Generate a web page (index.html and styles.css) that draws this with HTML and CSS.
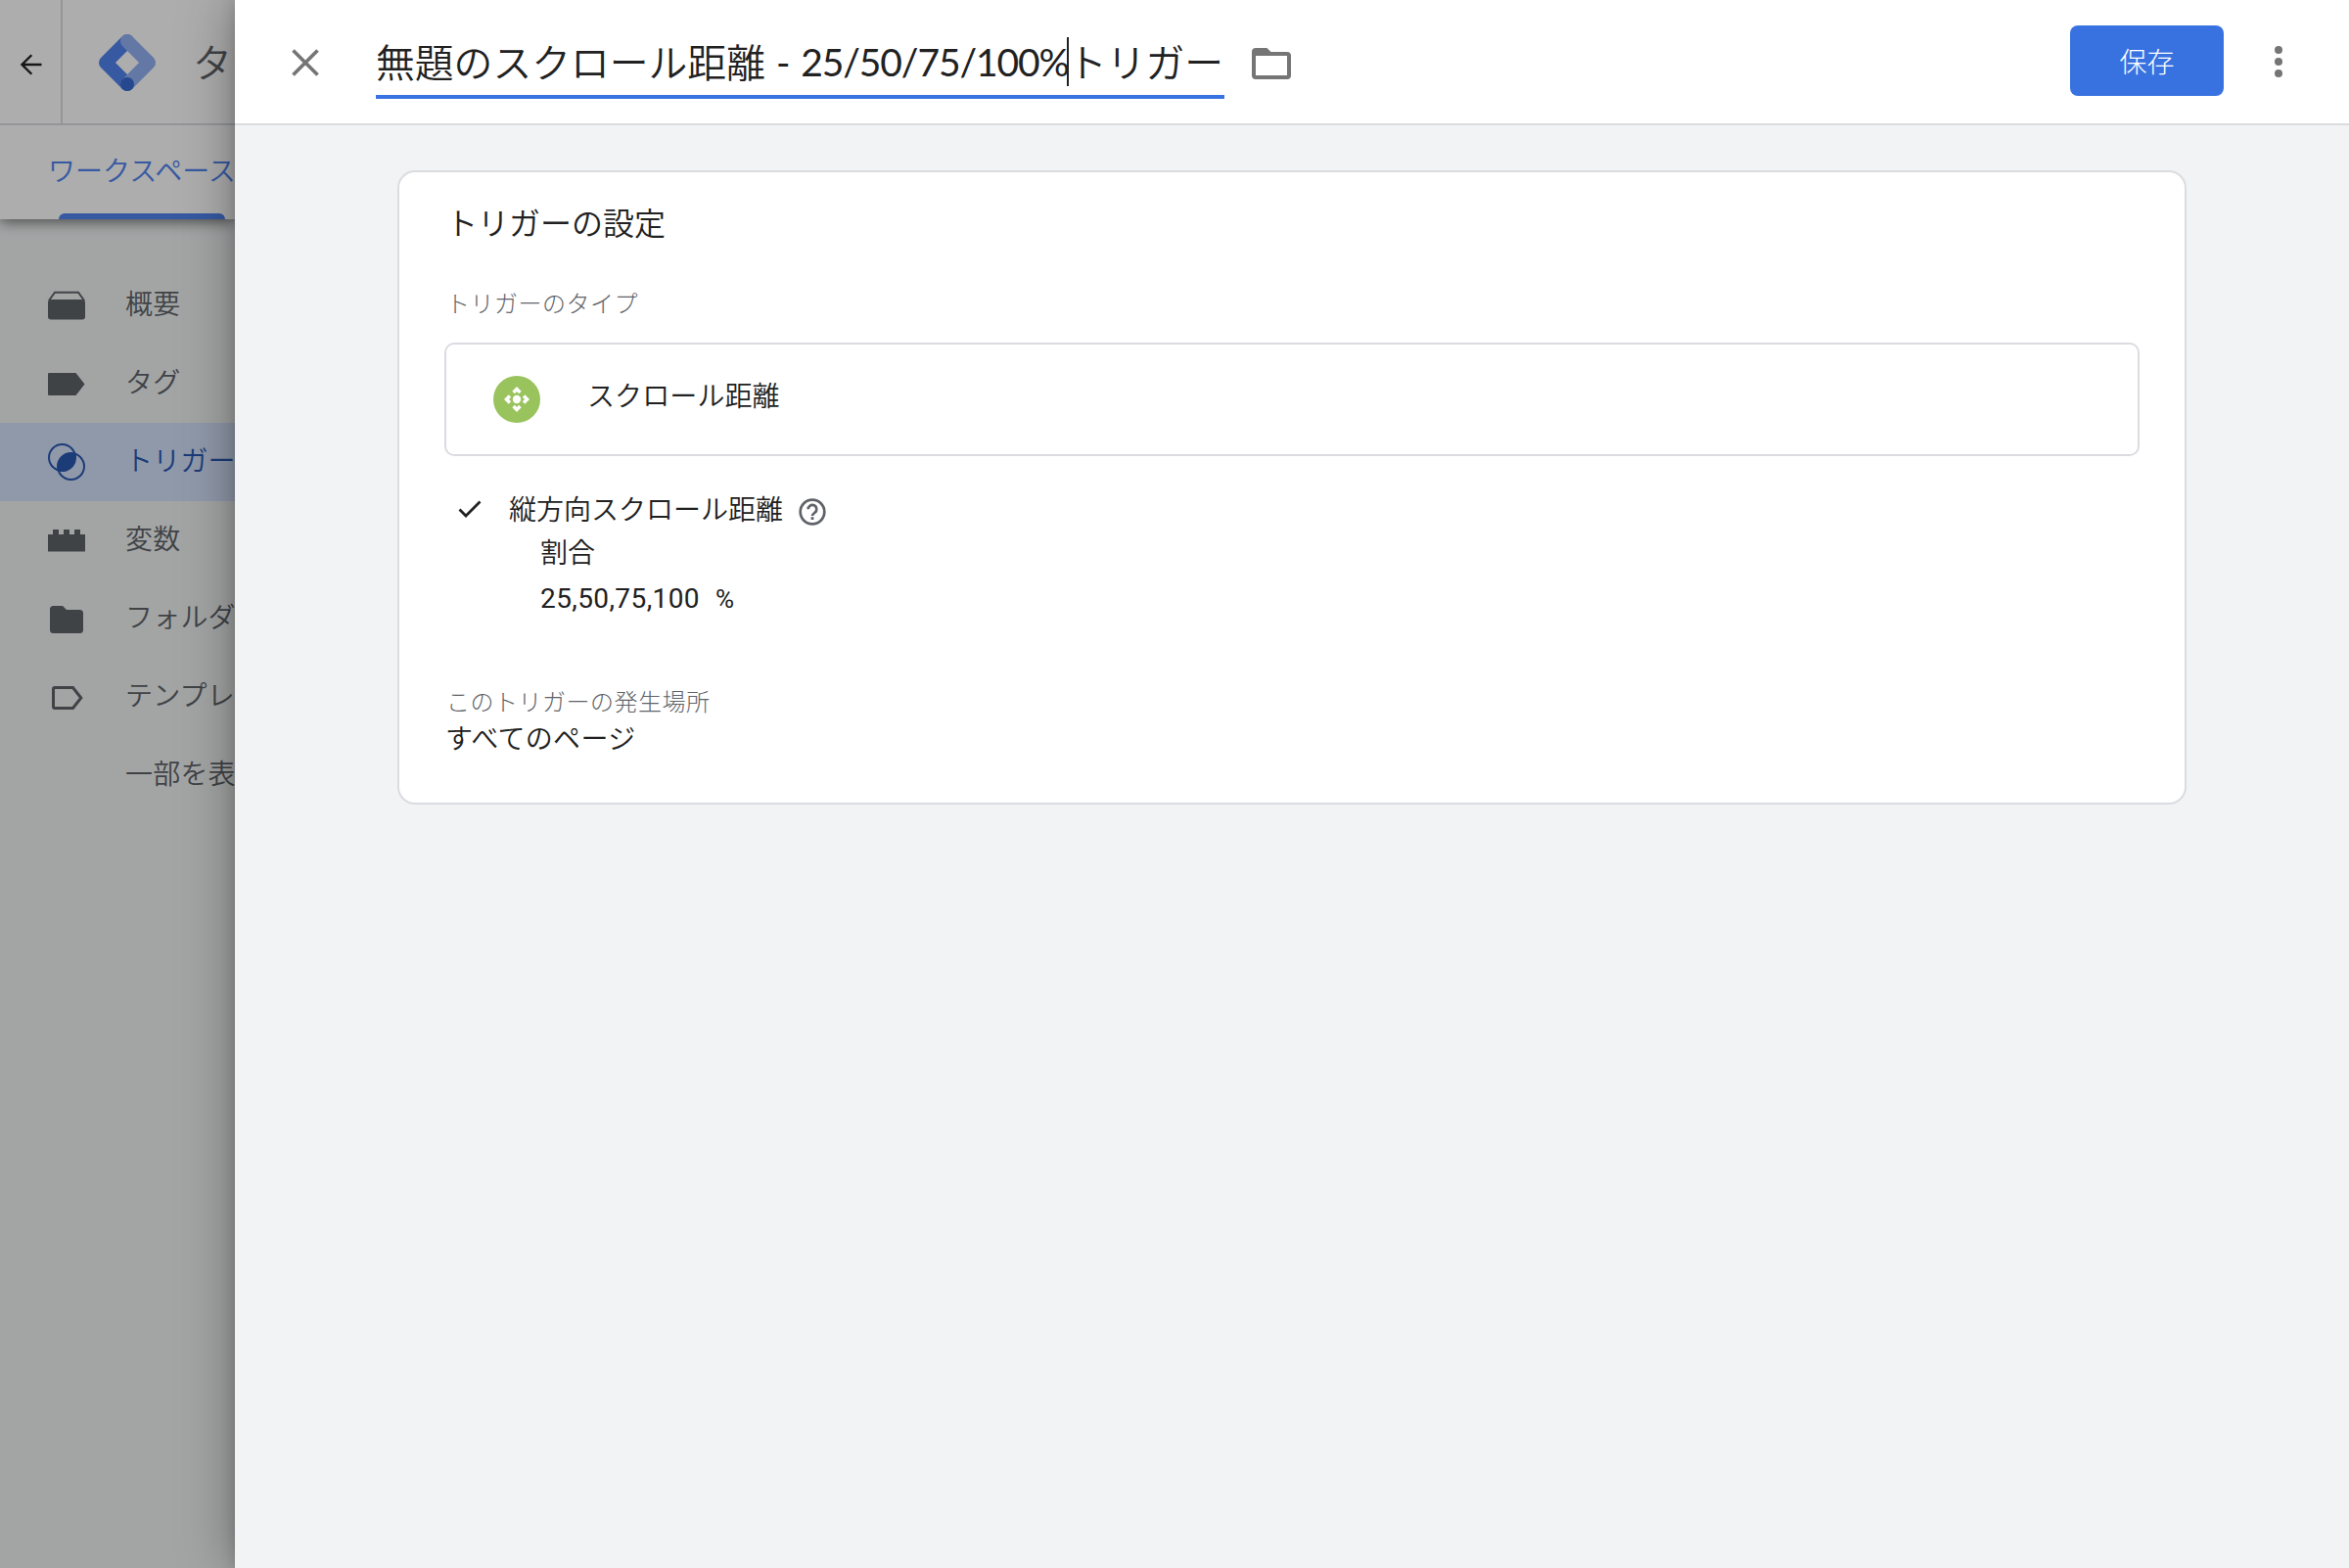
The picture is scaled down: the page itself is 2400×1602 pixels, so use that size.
FILE: index.html
```html
<!DOCTYPE html>
<html lang="ja">
<head>
	<meta charset="utf-8">
	<title>トリガーの設定</title>
	<link rel="stylesheet" href="styles.css">
</head>

<body>
	<div class="app">
		<header class="topbar">
			<div class="brand-row">
				<div class="back">
					<svg width="22" height="22" viewBox="0 0 22 22"><path d="M21.500 11H1.800M11.300 1.200L1.500 11l9.800 9.800" fill="none" stroke="#222" stroke-width="2.300"/></svg>
				</div>
				<svg class="logo" width="60" height="60" viewBox="0 0 60 60">
					<path d="M30 8L8 30l22 22" fill="none" stroke="#5083ef" stroke-width="14" stroke-linejoin="round" stroke-linecap="round"/>
					<path d="M30 8l22 22-22 22" fill="none" stroke="#93b1f3" stroke-width="14" stroke-linejoin="round" stroke-linecap="round"/>
					<circle cx="30" cy="52" r="7" fill="#376ad2"/>
				</svg>
				<span class="brand">タ</span>
			</div>
			<div class="tabs"><a class="tab">ワークスペース</a></div>
		</header>
		<nav class="menu">
			<a class="item">
				<svg width="40" height="40" viewBox="0 0 40 40"><path d="M2 15l6-8.300h24L38 15" fill="none" stroke="#5f6368" stroke-width="2"/><rect x="1" y="14" width="38" height="20.500" rx="3" fill="#5f6368"/></svg>
				<span>概要</span>
			</a>
			<a class="item">
				<svg width="40" height="40" viewBox="0 0 40 40"><path d="M2 9h27.500l9 11.500-9 11.500H2a1 1 0 0 1-1-1V10a1 1 0 0 1 1-1z" fill="#5f6368"/></svg>
				<span>タグ</span>
			</a>
			<a class="item active">
				<svg width="40" height="40" viewBox="0 0 40 40"><g fill="none" stroke="#2a59b2" stroke-width="2"><circle cx="15.500" cy="15.500" r="13.500"/><circle cx="24.500" cy="24.500" r="13.500"/></g><path d="M28.500 11.600A13.500 13.500 0 0 1 11.500 28.900 13.500 13.500 0 0 1 28.500 11.600z" fill="#2a59b2"/></svg>
				<span>トリガー</span>
			</a>
			<a class="item">
				<svg width="40" height="40" viewBox="0 0 40 40"><path d="M1 14h5V9h6v5h5V9h6v5h5V9h6v5h5v17.500H1z" fill="#5f6368"/></svg>
				<span>変数</span>
			</a>
			<a class="item">
				<svg width="40" height="40" viewBox="0 0 40 40"><path d="M6.500 7H16l4 4h13.500a3.500 3.500 0 0 1 3.500 3.500v17a3.500 3.500 0 0 1-3.500 3.500h-27A3.500 3.500 0 0 1 3 31.500v-21A3.500 3.500 0 0 1 6.500 7z" fill="#5f6368"/></svg>
				<span>フォルダ</span>
			</a>
			<a class="item">
				<svg width="40" height="40" viewBox="0 0 40 40"><path d="M8 10.500h18.500l8.300 10.500L26.500 31.500H8A1.500 1.500 0 0 1 6.500 30V12A1.500 1.500 0 0 1 8 10.500z" fill="none" stroke="#5f6368" stroke-width="3"/></svg>
				<span>テンプレ</span>
			</a>
			<a class="item more"><span>一部を表</span></a>
		</nav>
	</div>
	<div class="scrim"></div>

	<div class="sheet">
		<header class="sheet-head">
			<svg class="close" width="28" height="28" viewBox="0 0 28 28"><path d="M1.500 1.500l25 25M26.500 1.500l-25 25" stroke="#757575" stroke-width="3.700"/></svg>
			<div class="name"><span>無題のスクロール距離</span><span class="latin">- 25/50/75/100%</span><i class="caret"></i><span>トリガー</span></div>
			<svg class="folder" width="40" height="32" viewBox="0 0 40 32"><path d="M4 0h11.500l4 4H36a4 4 0 0 1 4 4v20a4 4 0 0 1-4 4H4a4 4 0 0 1-4-4V4a4 4 0 0 1 4-4zM4 8v20h32V8z" fill="#757575" fill-rule="evenodd"/></svg>
			<button class="save">保存</button>
			<svg class="dots" width="8" height="32" viewBox="0 0 8 32" fill="#757575"><circle cx="4" cy="4" r="4"/><circle cx="4" cy="16" r="4"/><circle cx="4" cy="28" r="4"/></svg>
		</header>

		<main class="card">
			<h2>トリガーの設定</h2>
			<div class="label">トリガーのタイプ</div>
			<div class="type">
				<svg width="48" height="48" viewBox="0 0 48 48">
					<circle cx="24" cy="24" r="24" fill="#99c35c"/>
					<circle cx="24" cy="24" r="4.200" fill="#fff"/>
					<g fill="#fff">
						<path d="M24 11l4.700 4.700-2.500 2.500L24 16l-2.200 2.200-2.500-2.500z"/>
						<path d="M24 11l4.700 4.700-2.500 2.500L24 16l-2.200 2.200-2.500-2.500z" transform="rotate(90 24 24)"/>
						<path d="M24 11l4.700 4.700-2.500 2.500L24 16l-2.200 2.200-2.500-2.500z" transform="rotate(180 24 24)"/>
						<path d="M24 11l4.700 4.700-2.500 2.500L24 16l-2.200 2.200-2.500-2.500z" transform="rotate(270 24 24)"/>
					</g>
				</svg>
				<span>スクロール距離</span>
			</div>
			<div class="option">
				<svg class="check" width="24" height="20" viewBox="0 0 24 20"><path d="M1.500 10.500l6.500 6.500L22.500 2.500" fill="none" stroke="#212121" stroke-width="2.800"/></svg>
				<span>縦方向スクロール距離</span>
				<svg class="help" width="28" height="28" viewBox="0 0 28 28"><circle cx="14" cy="14" r="12.300" fill="none" stroke="#5f6368" stroke-width="2.700"/><path d="M9.700 11.200a4.300 4.300 0 1 1 6.900 3.400c-1.600 1.200-2.600 1.900-2.600 3.500" fill="none" stroke="#5f6368" stroke-width="2.700"/><rect x="12.600" y="19.200" width="2.800" height="2.800" fill="#5f6368"/></svg>
			</div>
			<div class="sub">割合</div>
			<div class="sub values"><span>25,50,75,100</span><span class="unit">%</span></div>
			<div class="label where">このトリガーの発生場所</div>
			<div class="place">すべてのページ</div>
		</main>
	</div>
</body>
</html>
```
FILE: styles.css
```css
* {
	box-sizing: border-box;
}
body {
	margin: 0;
	height: 1602px;
	position: relative;
	overflow: hidden;
	background: #f1f3f4;
	font-family: Roboto, "Noto Sans CJK JP", sans-serif;
	font-size: 28px;
	font-weight: 350;
	color: #212121;
}
svg {
	flex: none;
	display: block;
}

/* page behind the sheet */
.app {
	width: 240px;
	height: 1602px;
	overflow: hidden;
}
.topbar {
	height: 224px;
	background: #fff;
	box-shadow: 0 2px 14px rgba(0,0,0,.6);
	position: relative;
}
.brand-row {
	display: flex;
	align-items: center;
	height: 128px;
	border-bottom: 2px solid #dadce0;
}
.back {
	width: 64px;
	height: 126px;
	border-right: 2px solid #dadce0;
	display: flex;
	align-items: center;
	padding: 6px 0 0 21px;
}
.logo {
	margin: 2px 0 0 36px;
}
.brand {
	margin: -2px 0 0 37px;
	font-size: 40px;
	color: #5f6368;
}
.tabs {
	height: 96px;
	padding-left: 49px;
	position: relative;
}
.tab {
	display: block;
	line-height: 95px;
	font-size: 28px;
	white-space: nowrap;
	color: #5083ef;
}
.tabs::after {
	content: "";
	position: absolute;
	left: 60px;
	bottom: 0;
	width: 170px;
	height: 6px;
	border-radius: 6px 6px 0 0;
	background: #5083ef;
}
.menu {
	padding-top: 48px;
}
.item {
	display: flex;
	align-items: center;
	height: 80px;
	padding-left: 48px;
	gap: 40px;
	color: #5f6368;
	white-space: nowrap;
}
.item span {
	margin-top: -7px;
	letter-spacing: .2px;
}
.active {
	background: #d5e2fb;
	color: #2a59b2;
}
.more {
	padding-left: 128px;
}
.scrim {
	position: absolute;
	inset: 0;
	background: rgba(0,0,0,.32);
}

/* sheet */
.sheet {
	position: absolute;
	left: 240px;
	top: 0;
	right: 0;
	height: 1602px;
	background: #f1f3f4;
	box-shadow: 0 0 52px rgba(0,0,0,.35), 0 0 14px rgba(0,0,0,.15);
}
.sheet-head {
	display: flex;
	align-items: center;
	height: 128px;
	padding: 0 68px 0 58px;
	background: #fff;
	border-bottom: 2px solid #dadce0;
}
.close {
	margin-top: 2px;
}
.name {
	display: flex;
	align-items: center;
	width: 867px;
	height: 80px;
	margin: -4px 0 0 58px;
	padding-top: 8px;
	padding-bottom: 4px;
	border-bottom: 4px solid #3872e0;
	font-size: 39.8px;
	white-space: nowrap;
}
.latin {
	margin: 4px 0 0 11px;
	width: 297px;
	font-family: Lato, sans-serif;
	font-size: 39px;
	font-weight: 400;
	letter-spacing: -1.1px;
	word-spacing: 3px;
}
.caret {
	width: 2px;
	height: 50px;
	margin-top: 4px;
	margin-right: -1px;
	background: #212121;
}
.folder {
	margin-left: 28px;
	margin-top: 4px;
}
.save {
	margin-left: auto;
	margin-top: -2px;
	width: 157px;
	height: 72px;
	border: 0;
	border-radius: 8px;
	background: #3872e0;
	color: #fff;
	font: inherit;
	font-weight: 300;
}
.dots {
	margin-left: 52px;
}
.card {
	width: 1828px;
	height: 648px;
	margin: 46px 0 0 166px;
	padding: 29px 46px 0;
	background: #fff;
	border: 2px solid #dadce0;
	border-radius: 18px;
}
h2 {
	margin: 0 0 0 2px;
	font-size: 32px;
	font-weight: 350;
	line-height: 48px;
}
.label {
	margin: 40px 0 0 2px;
	font-size: 24px;
	font-weight: 300;
	letter-spacing: .5px;
	line-height: 36px;
	color: #5f6368;
}
.type {
	display: flex;
	align-items: center;
	height: 116px;
	margin-top: 21px;
	padding-left: 48px;
	gap: 48px;
	border: 2px solid #dadce0;
	border-radius: 10px;
}
.type span {
	margin-top: -11px;
	letter-spacing: .1px;
}
.option {
	display: flex;
	align-items: center;
	height: 44px;
	margin: 32px 0 0 14px;
}
.option span {
	margin-left: 28px;
	margin-top: -3px;
}
.help {
	margin: 6px 0 0 16px;
}
.sub {
	margin: 2px 0 0 98px;
	line-height: 44px;
}
.values {
	display: flex;
	font-weight: 400;
	letter-spacing: .4px;
	margin-top: 2px;
}
.unit {
	margin-left: 16px;
	font-size: 26px;
}
.where {
	margin-top: 66px;
}
.place {
	margin-left: 1px;
	line-height: 39px;
	letter-spacing: .3px;
}
```
